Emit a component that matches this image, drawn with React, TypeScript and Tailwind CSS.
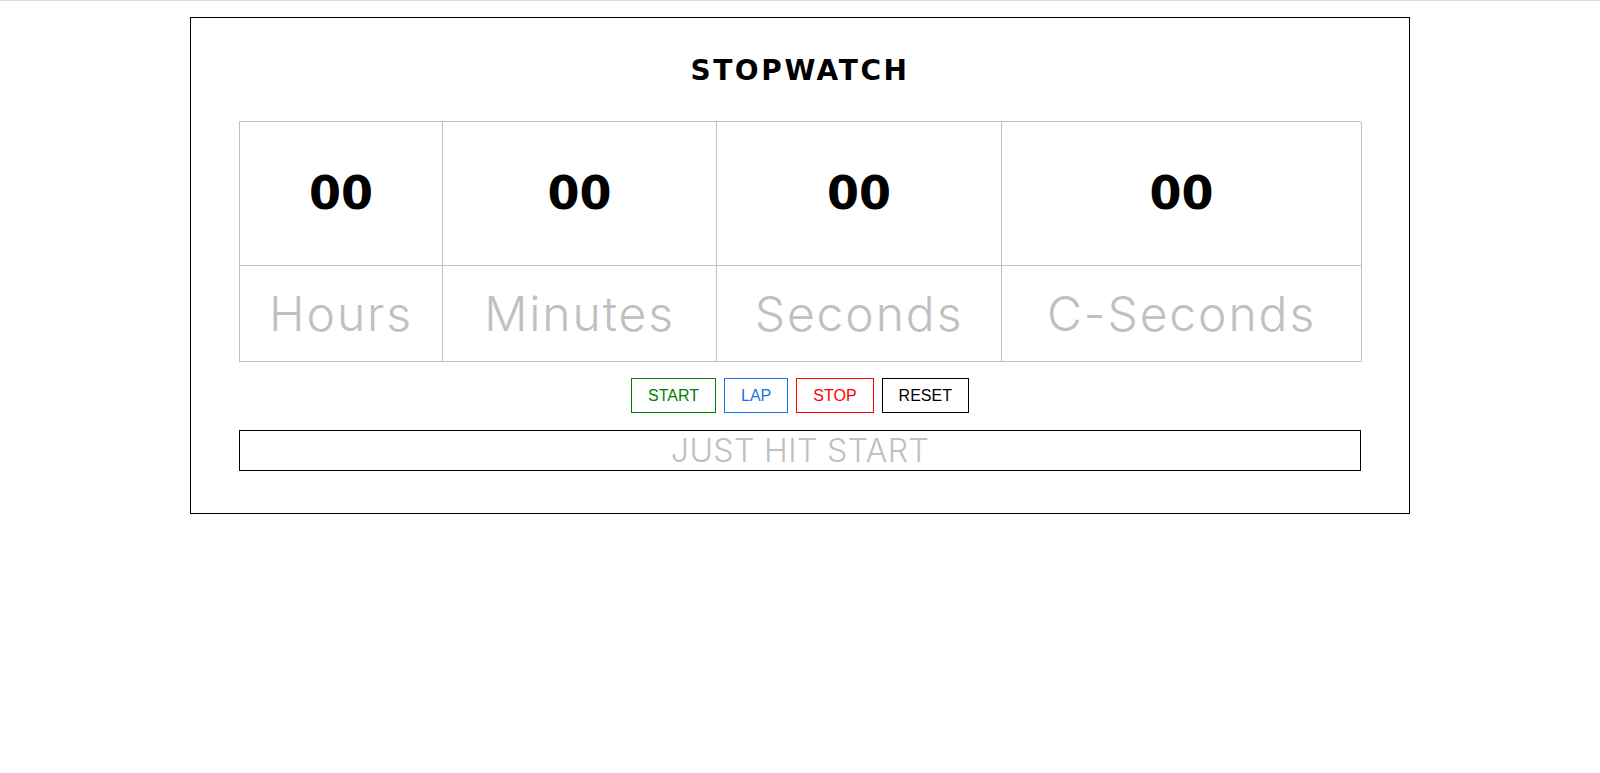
export default function App() {
  const cols = ["Hours", "Minutes", "Seconds", "C-Seconds"];

  return (
    <div className="min-h-screen bg-white border-t border-[#d9dce0]">
      <div className="w-[1220px] mx-auto mt-4 border border-black px-12 pt-[36px] pb-[42px]">
        <h1 className="text-center text-[28px] leading-[34px] font-bold tracking-[2.6px] text-black font-['DejaVu_Sans',sans-serif]">
          STOPWATCH
        </h1>

        <div className="mt-[33px] grid grid-cols-[203px_274px_285px_360px] border-l border-t border-[#c0c0c0]">
          {cols.map((c) => (
            <div key={c + "v"} className="h-[144px] flex items-center justify-center border-r border-b border-[#c0c0c0] text-[46px] font-bold text-black font-['DejaVu_Sans',sans-serif]">
              00
            </div>
          ))}
          {cols.map((c) => (
            <div key={c} className="h-[96px] flex items-center justify-center border-r border-b border-[#c0c0c0] text-[48px] font-light tracking-[1.9px] text-[#c0c0c0] font-['Inter',sans-serif]">
              {c}
            </div>
          ))}
        </div>

        <div className="mt-[16px] flex justify-center gap-2 font-['Liberation_Sans',Arial,sans-serif] text-base">
          <button className="h-[35px] px-4 border border-[#008000] text-[#008000]">START</button>
          <button className="h-[35px] px-4 border border-[#1a73e8] text-[#1a73e8]">LAP</button>
          <button className="h-[35px] px-4 border border-[#ff0000] text-[#ff0000]">STOP</button>
          <button className="h-[35px] px-4 border border-black text-black">RESET</button>
        </div>

        <div className="mt-[17px] h-[41px] border border-black flex items-center justify-center text-[32px] tracking-[0.4px] text-[#c0c0c0] font-['Inter',sans-serif] font-light">
          JUST HIT START
        </div>
      </div>
    </div>
  );
}
